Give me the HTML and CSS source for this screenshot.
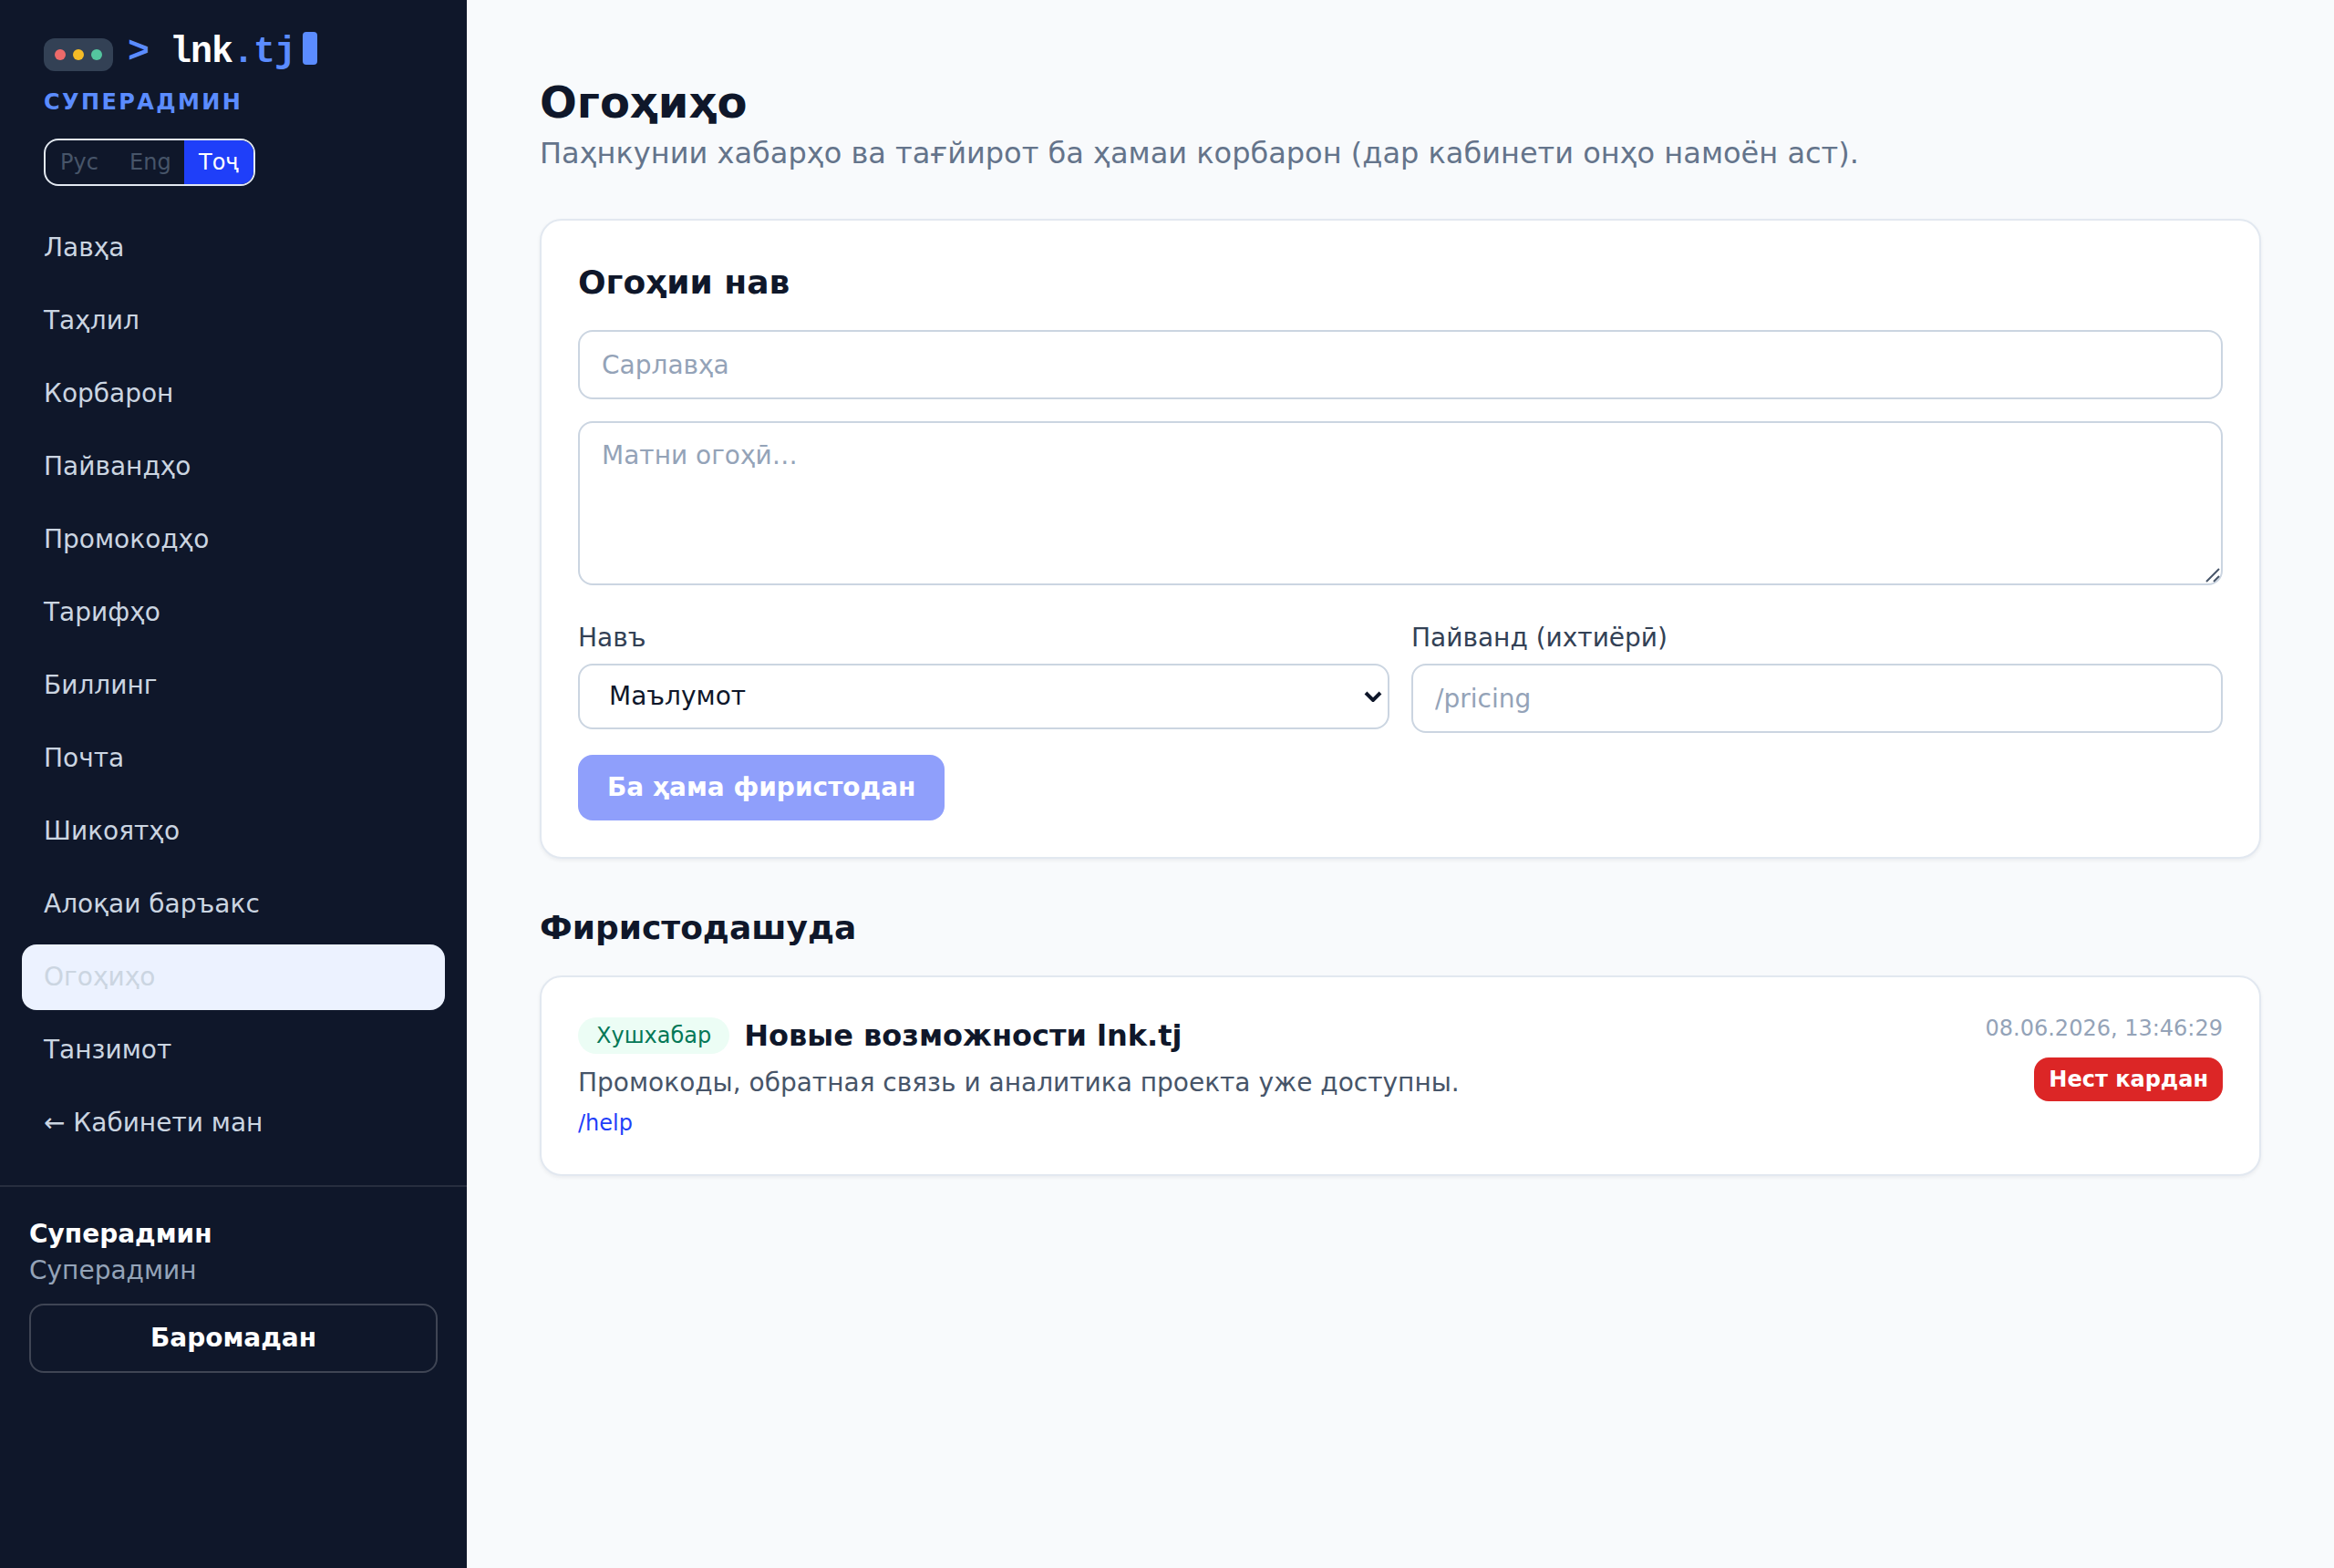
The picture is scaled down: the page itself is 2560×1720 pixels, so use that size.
FILE: index.html
```
<!DOCTYPE html>
<html lang="tg">

<head>
    <meta charset="UTF-8">
    <meta name="viewport" content="width=device-width, initial-scale=1.0">
    <title>lnk.tj</title>
    <link rel="stylesheet" href="styles.css">
</head>

<body>

    <div class="layout">
        <aside class="sidebar">
            <div class="brand">
                <a class="logo" href="#">
                    <span class="dots">
                        <span class="dot dot-red"></span>
                        <span class="dot dot-yellow"></span>
                        <span class="dot dot-green"></span>
                    </span>
                    <span class="logo-text"><span class="accent">&gt;</span> lnk<span class="accent">.tj</span></span>
                    <span class="cursor"></span>
                </a>
                <div class="role">Суперадмин</div>
                <div class="langs">
                    <button type="button">Рус</button>
                    <button type="button">Eng</button>
                    <button type="button" class="active">Тоҷ</button>
                </div>
            </div>

            <nav class="menu">
                <a href="#">Лавҳа</a>
                <a href="#">Таҳлил</a>
                <a href="#">Корбарон</a>
                <a href="#">Пайвандҳо</a>
                <a href="#">Промокодҳо</a>
                <a href="#">Тарифҳо</a>
                <a href="#">Биллинг</a>
                <a href="#">Почта</a>
                <a href="#">Шикоятҳо</a>
                <a href="#">Алоқаи баръакс</a>
                <a href="#" class="active">Огоҳиҳо</a>
                <a href="#">Танзимот</a>
                <a href="#">← Кабинети ман</a>
            </nav>

            <div class="account">
                <div class="account-name">Суперадмин</div>
                <div class="account-role">Суперадмин</div>
                <button type="button" class="logout">Баромадан</button>
            </div>
        </aside>

        <main class="content">
            <h1>Огоҳиҳо</h1>
            <p class="subtitle">Паҳнкунии хабарҳо ва тағйирот ба ҳамаи корбарон (дар кабинети онҳо намоён аст).</p>

            <form class="card form">
                <h2>Огоҳии нав</h2>
                <input class="field" type="text" placeholder="Сарлавҳа" aria-label="Сарлавҳа">
                <div class="textarea-wrap">
                    <textarea class="field" placeholder="Матни огоҳӣ…" aria-label="Матни огоҳӣ"></textarea>
                    <svg class="grip" width="16" height="16" viewBox="0 0 16 16" fill="none" stroke="#475569" stroke-width="2">
                        <path d="M1 15L15 1M9 15L15 9" />
                    </svg>
                </div>
                <div class="columns">
                    <div>
                        <label for="type">Навъ</label>
                        <div class="select-wrap">
                            <select class="field" id="type">
                                <option>Маълумот</option>
                            </select>
                            <svg class="arrow" width="20" height="12" viewBox="0 0 20 12" fill="none" stroke="#0f172a" stroke-width="4">
                                <path d="M2 2L10 10L18 2" />
                            </svg>
                        </div>
                    </div>
                    <div>
                        <label for="link">Пайванд (ихтиёрӣ)</label>
                        <input class="field" type="text" id="link" placeholder="/pricing">
                    </div>
                </div>
                <button type="submit" class="send" disabled>Ба ҳама фиристодан</button>
            </form>

            <h2 class="section-title">Фиристодашуда</h2>

            <article class="card notice">
                <div>
                    <div class="notice-head">
                        <span class="tag">Хушхабар</span>
                        <h3>Новые возможности lnk.tj</h3>
                    </div>
                    <p>Промокоды, обратная связь и аналитика проекта уже доступны.</p>
                    <a href="#">/help</a>
                </div>
                <div class="notice-side">
                    <time>08.06.2026, 13:46:29</time>
                    <button type="button" class="delete">Нест кардан</button>
                </div>
            </article>
        </main>
    </div>

</body>

</html>
```
FILE: styles.css
```
* {
    box-sizing: border-box;
}

body {
    margin: 0;
    font-family: "DejaVu Sans", sans-serif;
    font-size: 28px;
    line-height: 40px;
    color: #0f172a;
    background-color: #f8fafc;
}

h1,
h2,
h3,
p {
    margin: 0;
}

a {
    text-decoration: none;
}

button,
input,
select,
textarea {
    font: inherit;
}

button {
    border: 0;
    cursor: pointer;
}

.layout {
    display: flex;
    min-height: 100vh;
}

/* Sidebar */
.sidebar {
    width: 512px;
    flex-shrink: 0;
    background-color: #0f172a;
}

.brand {
    padding: 24px 48px 32px;
}

.logo {
    display: flex;
    align-items: center;
    height: 64px;
    color: #fff;
}

.dots {
    display: flex;
    gap: 8px;
    margin: 8px 16px 0 0;
    padding: 12px;
    border-radius: 12px;
    background-color: #334155;
}

.dot {
    width: 12px;
    height: 12px;
    border-radius: 50%;
}

.dot-red {
    background-color: #ed6a6a;
}

.dot-yellow {
    background-color: #f4bb26;
}

.dot-green {
    background-color: #54c59f;
}

.logo-text {
    padding-top: 4px;
    font-family: "Liberation Mono", monospace;
    font-size: 40px;
    font-weight: bold;
    letter-spacing: -1px;
    white-space: pre;
}

.accent {
    color: #5b8cff;
}

.cursor {
    width: 16px;
    height: 36px;
    margin: 0 0 6px 8px;
    border-radius: 4px;
    background-color: #5b8cff;
}

.role {
    margin: 8px 0 24px;
    font-size: 24px;
    line-height: 32px;
    font-weight: bold;
    letter-spacing: 0.1em;
    text-transform: uppercase;
    color: #5b8cff;
}

.langs {
    display: inline-flex;
    vertical-align: top;
    border: 2px solid #e2e8f0;
    border-radius: 16px;
    overflow: hidden;
}

.langs button {
    min-width: 76px;
    padding: 8px 0 8px 16px;
    font-size: 24px;
    line-height: 32px;
    text-align: left;
    color: #475569;
    background-color: transparent;
}

.langs .active {
    color: #fff;
    background-color: #1f3ff9;
}

.menu {
    display: flex;
    flex-direction: column;
    gap: 8px;
    padding: 0 24px 32px;
}

.menu a {
    padding: 16px 24px;
    border-radius: 16px;
    color: #cbd5e1;
}

.menu .active {
    background-color: #ecf2ff;
}

.account {
    padding: 32px;
    border-top: 2px solid rgba(255, 255, 255, 0.1);
}

.account-name {
    font-weight: bold;
    color: #fff;
}

.account-role {
    color: #94a3b8;
}

.logout {
    width: 100%;
    margin-top: 16px;
    padding: 16px;
    border: 2px solid rgba(255, 255, 255, 0.2);
    border-radius: 16px;
    font-weight: bold;
    color: #fff;
    background-color: transparent;
}

/* Content */
.content {
    flex: 1;
    min-width: 0;
    padding: 80px;
}

h1 {
    font-size: 48px;
    line-height: 64px;
}

h2 {
    font-size: 36px;
    line-height: 56px;
}

.subtitle {
    margin-bottom: 48px;
    font-size: 32px;
    line-height: 48px;
    color: #64748b;
}

.card {
    padding: 40px;
    border: 2px solid #e2e8f0;
    border-radius: 24px;
    background-color: #fff;
    box-shadow: 0 2px 4px rgba(15, 23, 42, 0.06);
}

.form {
    display: flex;
    flex-direction: column;
    align-items: stretch;
    gap: 24px;
}

.field {
    display: block;
    width: 100%;
    padding: 16px 24px;
    border: 2px solid #cbd5e1;
    border-radius: 16px;
    color: #0f172a;
    background-color: #fff;
}

input.field {
    height: 76px;
}

.field::placeholder {
    color: #94a3b8;
}

.textarea-wrap,
.select-wrap {
    position: relative;
}

textarea.field {
    height: 180px;
    resize: none;
}

.grip {
    position: absolute;
    right: 3px;
    bottom: 3px;
}

select.field {
    height: 72px;
    padding: 12px 32px;
    appearance: none;
}

.arrow {
    position: absolute;
    right: 8px;
    top: 30px;
    pointer-events: none;
}

.columns {
    display: grid;
    grid-template-columns: 1fr 1fr;
    gap: 24px;
    padding-top: 14px;
}

label {
    display: block;
    margin-bottom: 8px;
    color: #334155;
}

.send {
    align-self: flex-start;
    padding: 16px 32px;
    border-radius: 16px;
    font-weight: bold;
    color: #fff;
    background-color: #8f9ffb;
    cursor: default;
}

.section-title {
    margin: 48px 0 24px;
}

.notice {
    display: flex;
    justify-content: space-between;
    gap: 24px;
}

.notice-head {
    display: flex;
    align-items: center;
    gap: 16px;
    margin-bottom: 8px;
}

.notice h3 {
    font-size: 32px;
    line-height: 48px;
}

.tag {
    padding: 4px 20px;
    border-radius: 20px;
    font-size: 24px;
    line-height: 32px;
    color: #047857;
    background-color: #ecfdf5;
}

.notice p {
    margin-bottom: 8px;
    color: #475569;
}

.notice a {
    display: block;
    font-size: 24px;
    line-height: 32px;
    color: #1f3ff9;
}

.notice-side {
    display: flex;
    flex-direction: column;
    align-items: flex-end;
    gap: 16px;
    font-size: 24px;
    line-height: 32px;
    color: #94a3b8;
}

.delete {
    padding: 8px 16px;
    border-radius: 16px;
    font-weight: bold;
    color: #fff;
    background-color: #dc2626;
}
```
